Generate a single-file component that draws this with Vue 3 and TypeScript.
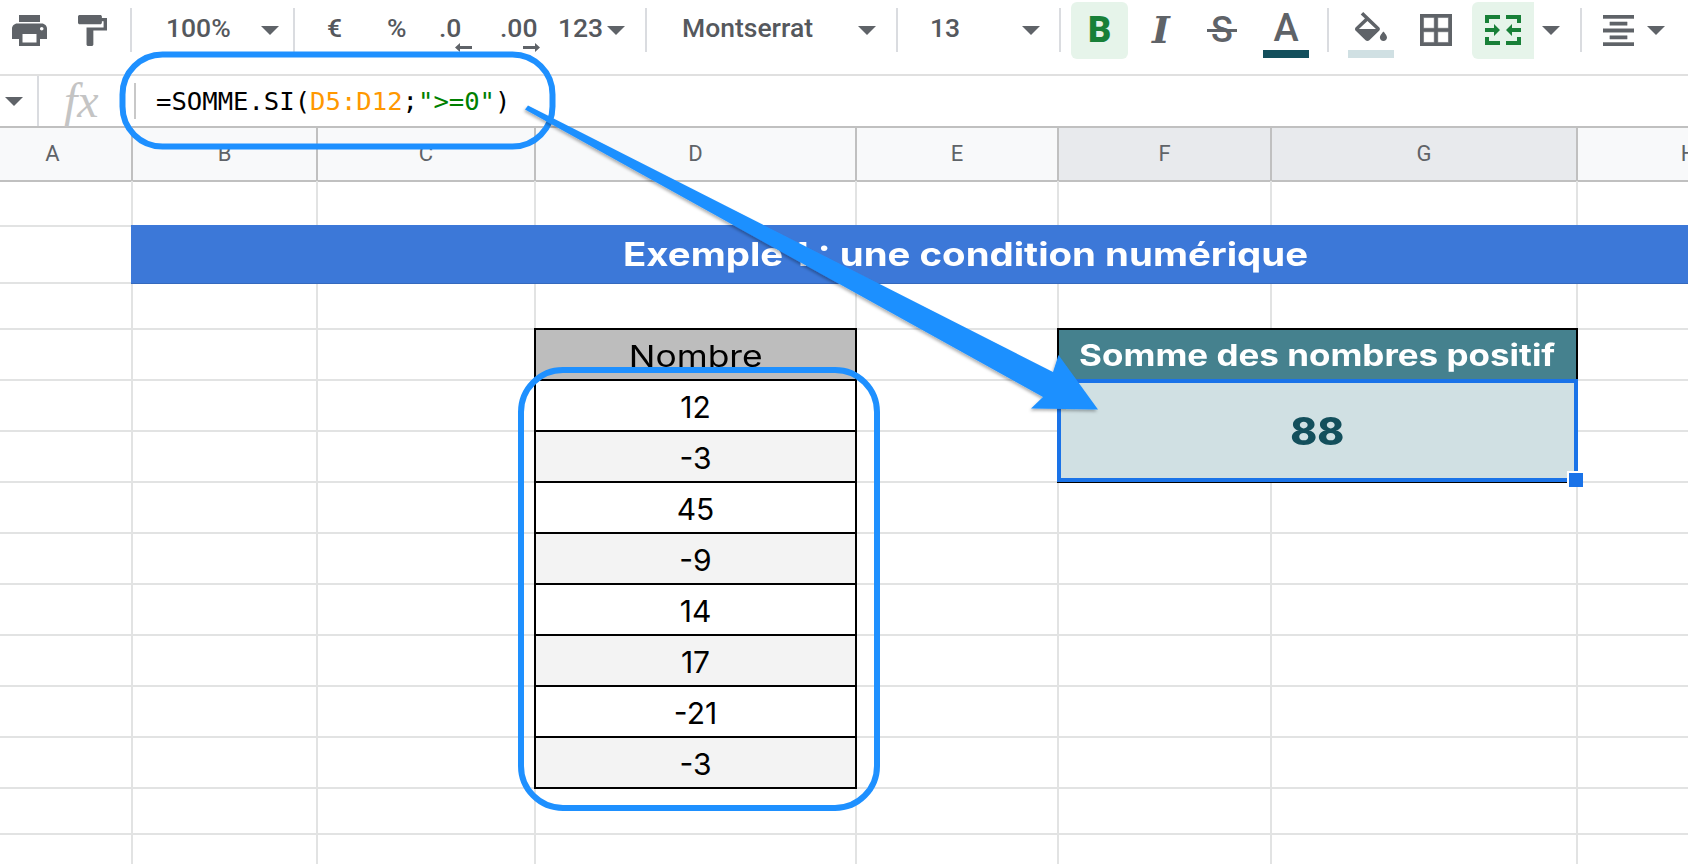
<script setup lang="ts">
interface Cell { key: string; text?: string; cls: string; col: number; row: number; colSpan?: number; rowSpan?: number }

const columns = ['A', 'B', 'C', 'D', 'E', 'F', 'G', 'H']
const selectedColumns = ['F', 'G']
const numbers = ['12', '-3', '45', '-9', '14', '17', '-21', '-3']
const rowCount = 14

const cells: Cell[] = []
for (let row = 1; row <= rowCount; row++) {
  for (let col = 1; col <= 8; col++) {
    const isBand = row === 2 && col >= 2
    const isResult = (row === 4 || row === 5 || row === 6) && (col === 6 || col === 7)
    const isTable = col === 4 && row >= 4 && row <= 12
    if (isBand || isResult || isTable) continue
    cells.push({ key: `${row}-${col}`, cls: 'grid-cell', col, row })
  }
}
cells.push({ key: 'band', text: 'Exemple 1 : une condition numérique', cls: 'band', col: 2, row: 2, colSpan: 7 })
cells.push({ key: 'head', text: 'Nombre', cls: 'tcell thead', col: 4, row: 4 })
numbers.forEach((n, i) => {
  cells.push({ key: `n${i}`, text: n, cls: i % 2 ? 'tcell alt' : 'tcell', col: 4, row: 5 + i })
})
cells.push({ key: 'rh', text: 'Somme des nombres positif', cls: 'rhead', col: 6, row: 4, colSpan: 2 })

function area(c: Cell): string {
  return `${c.row} / ${c.col} / span ${c.rowSpan ?? 1} / span ${c.colSpan ?? 1}`
}
</script>

<template>
  <div class="page">
    <header class="toolbar">
      <svg class="ic i-print" viewBox="2 3 20 18" preserveAspectRatio="none"><path d="M19 8H5c-1.66 0-3 1.34-3 3v6h4v4h12v-4h4v-6c0-1.66-1.34-3-3-3zm-3 11H8v-5h8v5zm3-7c-.55 0-1-.45-1-1s.45-1 1-1 1 .45 1 1-.45 1-1 1zm-1-9H6v4h12V3z"/></svg>
      <svg class="ic i-roller" viewBox="4 2 17 20" preserveAspectRatio="none"><path d="M18 4V3c0-.55-.45-1-1-1H5c-.55 0-1 .45-1 1v4c0 .55.45 1 1 1h12c.55 0 1-.45 1-1V6h1v4H9v11c0 .55.45 1 1 1h2c.55 0 1-.45 1-1v-9h8V4h-3z"/></svg>
      <i class="sep s1"></i>
      <span class="tx t-zoom">100%</span><i class="caret c-zoom"></i>
      <i class="sep s2"></i>
      <span class="tx t-eur">€</span>
      <span class="tx t-pct">%</span>
      <span class="tx t-d0">.0<svg class="mini mini-l" viewBox="0 0 17 9"><path d="M0 4.500 5 0v3h12v3H5v3z"/></svg></span>
      <span class="tx t-d00">.00<svg class="mini mini-r" viewBox="0 0 17 9"><path d="M17 4.500 12 0v3H0v3h12v3z"/></svg></span>
      <span class="tx t-123">123</span><i class="caret c-123"></i>
      <i class="sep s3"></i>
      <span class="tx t-font">Montserrat</span><i class="caret c-font"></i>
      <i class="sep s4"></i>
      <span class="tx t-size">13</span><i class="caret c-size"></i>
      <i class="sep s5"></i>
      <span class="btn-b">B</span>
      <span class="t-i">I</span>
      <span class="t-s">S</span>
      <span class="t-a"><b>A</b><i class="bar bar-a"></i></span>
      <i class="sep s6"></i>
      <span class="fill">
        <svg class="ic i-bucket" viewBox="3 0 18 17" preserveAspectRatio="none"><path d="M16.56 8.94L7.62 0 6.21 1.41l2.38 2.38-5.15 5.15c-.59.59-.59 1.54 0 2.12l5.5 5.5c.29.29.68.44 1.06.44s.77-.15 1.06-.44l5.5-5.5c.59-.58.59-1.53 0-2.12zM5.21 10L10 5.21 14.79 10H5.21zM19 11.5s-2 2.17-2 3.5c0 1.1.9 2 2 2s2-.9 2-2c0-1.33-2-3.5-2-3.5z"/></svg>
        <i class="bar bar-f"></i>
      </span>
      <svg class="ic i-border" viewBox="3 3 18 18"><path stroke="#5f6368" stroke-width=".3" d="M3 3v18h18V3H3zm8 16H5v-6h6v6zm0-8H5V5h6v6zm8 8h-6v-6h6v6zm0-8h-6V5h6v6z"/></svg>
      <span class="btn-merge">
        <svg viewBox="0 0 36 30" width="36" height="30"><path fill="#188038" d="M0 0h15v4H4v4H0zM21 0h15v8h-4V4H21zM0 22h4v4h11v4H0zM32 22h4v8H21v-4h11zM0 13h9V9l6 6-6 6v-4H0zM36 13h-9V9l-6 6 6 6v-4h9z"/></svg>
      </span>
      <i class="caret c-merge"></i>
      <i class="sep s7"></i>
      <svg class="ic i-align" viewBox="3 3 18 18"><path stroke="#5f6368" stroke-width=".25" d="M7 15v2h10v-2H7zm-4 6h18v-2H3v2zm0-8h18v-2H3v2zm4-6v2h10V7H7zM3 3v2h18V3H3z"/></svg>
      <i class="caret c-align"></i>
    </header>

    <div class="formula">
      <i class="caret c-name"></i>
      <i class="fsep f1"></i>
      <span class="fx">fx</span>
      <i class="fsep f2"></i>
      <span class="code">=SOMME.SI(<span class="orange">D5:D12</span>;<span class="green">"&gt;=0"</span>)</span>
    </div>

    <div class="cols heads">
      <div
        v-for="c in columns"
        :key="c"
        class="head"
        :class="[{ sel: selectedColumns.includes(c) }, c === 'A' ? 'head-a' : '']"
      >{{ c }}</div>
    </div>

    <div class="cols sheet">
      <div v-for="c in cells" :key="c.key" :class="c.cls" :style="{ gridArea: area(c) }"><span v-if="c.text" class="txt">{{ c.text }}</span></div>
      <div class="result"><span class="txt">88</span><i class="handle"></i></div>
    </div>

    <svg class="overlay" viewBox="0 0 1688 864">
      <defs>
        <filter id="sh" x="-5%" y="-5%" width="110%" height="115%">
          <feDropShadow dx="-1" dy="2" stdDeviation="1.500" flood-color="#000" flood-opacity=".3"/>
        </filter>
      </defs>
      <rect x="122.500" y="54.500" width="430" height="92" rx="40" fill="none" stroke="#1e90ff" stroke-width="6"/>
      <rect x="521" y="370" width="356" height="438" rx="42" fill="none" stroke="#1e90ff" stroke-width="6"/>
      <path filter="url(#sh)" fill="#1e90ff" d="M525 109.500 528 105.500 1053 372 1058.500 355 1098 409.500 1031 408.500 1043 397z"/>
    </svg>
  </div>
</template>

<style>
html, body { margin: 0; background: #fff; }
</style>

<style scoped>
.page {
  position: relative;
  width: 1688px;
  height: 864px;
  overflow: hidden;
  background: #fff;
  font-family: "Inter", "Liberation Sans", sans-serif;
}

/* toolbar */
.toolbar {
  display: flex;
  align-items: center;
  box-sizing: border-box;
  height: 76px;
  padding-bottom: 14px;
  border-bottom: 2px solid #e0e0e0;
  color: #5f6368;
  white-space: nowrap;
}
.ic { fill: #5f6368; flex: none; display: block; }
.i-print { width: 35px; height: 31px; margin-left: 12px; }
.i-roller { width: 29px; height: 31px; margin-left: 31px; }
.sep { flex: none; width: 2px; height: 44px; background: #dadce0; }
.s1 { margin-left: 23px; }
.s2 { margin-left: 14px; }
.s3 { margin-left: 20px; }
.s4 { margin-left: 20px; }
.s5 { margin-left: 19px; }
.s6 { margin-left: 18px; }
.s7 { margin-left: 20px; }
.tx {
  flex: none;
  position: relative;
  font: 500 26.500px/30px "Roboto", "Liberation Sans", sans-serif;
  color: #55585d;
  padding-bottom: 4px;
}
.caret {
  flex: none;
  width: 0;
  height: 0;
  border-left: 9px solid transparent;
  border-right: 9px solid transparent;
  border-top: 9px solid #5f6368;
}
.t-zoom { margin-left: 34px; width: 62px; }
.c-zoom { margin-left: 33px; }
.t-eur { margin-left: 32px; width: 15px; }
.t-pct { margin-left: 45px; width: 19px; }
.t-d0 { margin-left: 33px; width: 20px; }
.t-d00 { margin-left: 41px; width: 37px; }
.mini { position: absolute; width: 17px; height: 9px; top: 30px; fill: #5f6368; }
.mini-l { left: 16px; }
.mini-r { left: 23px; }
.t-123 { margin-left: 21px; width: 44px; }
.c-123 { margin-left: 5px; }
.t-font { margin-left: 35px; width: 131px; }
.c-font { margin-left: 45px; }
.t-size { margin-left: 32px; width: 28px; }
.c-size { margin-left: 64px; }
.btn-b {
  flex: none;
  margin-left: 10px;
  width: 57px;
  height: 57px;
  border-radius: 6px;
  background: #e6f4ea;
  color: #188038;
  font: 900 36px/57px "Roboto", sans-serif;
  text-align: center;
}
.t-i {
  flex: none;
  margin-left: 20px;
  width: 26px;
  font: italic 700 38px/40px "DejaVu Serif", serif;
  text-align: center;
}
.t-s {
  flex: none;
  position: relative;
  margin-left: 33px;
  width: 30px;
  font: 500 36px/40px "Roboto", sans-serif;
  text-align: center;
}
.t-s::after {
  content: "";
  position: absolute;
  left: 0;
  right: 0;
  top: 19px;
  height: 3px;
  background: #5f6368;
}
.t-a {
  flex: none;
  display: flex;
  flex-direction: column;
  align-items: center;
  margin-left: 26px;
  width: 46px;
}
.t-a b { font: 500 38px/38px "Roboto", sans-serif; padding-top: 7px; }
.bar { display: block; width: 46px; height: 8px; }
.bar-a { background: #134f5c; margin-top: 3px; }
.bar-f { background: #d0e0e3; margin-top: 9px; }
.fill {
  flex: none;
  display: flex;
  flex-direction: column;
  align-items: center;
  padding-top: 10px;
  margin-left: 19px;
  width: 46px;
}
.i-bucket { width: 32px; height: 29px; }
.i-border { width: 32px; height: 32px; margin-left: 26px; }
.btn-merge {
  flex: none;
  display: flex;
  align-items: center;
  justify-content: center;
  margin-left: 20px;
  width: 62px;
  height: 57px;
  background: #e6f4ea;
  border-radius: 6px 0 0 6px;
}
.c-merge { margin-left: 8px; }
.i-align { width: 31px; height: 31px; margin-left: 21px; }
.c-align { margin-left: 13px; }

/* formula bar */
.formula {
  display: flex;
  align-items: center;
  height: 50px;
  border-bottom: 2px solid #c0c0c0;
  box-sizing: content-box;
}
.c-name { margin-left: 5px; }
.fsep { flex: none; width: 2px; background: #dadce0; }
.f1 { height: 50px; margin-left: 14px; }
.f2 { height: 36px; margin-left: 28px; background: #c8c8c8; }
.fx {
  flex: none;
  width: 42px;
  margin-left: 25px;
  font: italic 400 48px/48px "Liberation Serif", serif;
  color: #c4c4c4;
}
.code {
  margin-left: 20px;
  font: 400 25.600px/50px "DejaVu Sans Mono", monospace;
  color: #000;
  white-space: pre;
}
.orange { color: #ff9800; }
.green { color: #008000; }

/* grids */
.cols {
  display: grid;
  grid-template-columns: 133px 185px 218px 321px 202px 213px 306px 223px;
  width: 1801px;
}
.heads { height: 53px; }
.head {
  box-sizing: border-box;
  background: #f8f9fa;
  border-right: 2px solid #c0c0c0;
  border-bottom: 2px solid #c0c0c0;
  text-align: center;
  font: 400 22px/52px "Roboto", sans-serif;
  color: #5f6368;
}
.head-a { padding-right: 26px; }
.sel { background: #e8eaed; }

.sheet {
  grid-template-rows: 46px 57px 46px repeat(9, 51px) 46px 40px;
}
.grid-cell {
  box-sizing: border-box;
  border-right: 2px solid #e2e3e3;
  border-bottom: 2px solid #e2e3e3;
}
.txt { display: inline-block; }
.band {
  margin: -2px 0 0 -2px;
  background: #3c78d8;
  border-bottom: 1px solid #3569bd;
  color: #fff;
  font-weight: 700;
  font-size: 33px;
  line-height: 59px;
  text-align: center;
}
.band .txt { transform: scaleX(1.163); }
.tcell {
  margin: -2px 0 0 -2px;
  border: 2px solid #000;
  background: #fff;
  color: #000;
  font-size: 30px;
  line-height: 53px;
  text-align: center;
}
.thead { background: #bdbdbd; }
.thead .txt { transform: scaleX(1.18); }
.alt { background: #f3f3f3; }
.rhead {
  margin: -2px 0 0 -2px;
  border: 2px solid #000;
  background: #45818e;
  color: #fff;
  font-weight: 700;
  font-size: 30px;
  line-height: 51px;
  text-align: center;
  white-space: nowrap;
}
.rhead .txt { transform: scaleX(1.166); }
.result {
  grid-area: 5 / 6 / span 2 / span 2;
  position: relative;
  box-sizing: border-box;
  margin: -2px 0 1px -2px;
  border: 4px solid #1a73e8;
  background: #d0e0e3;
  color: #134f5c;
  font-weight: 800;
  font-size: 38px;
  line-height: 96px;
  text-align: center;
  box-shadow: 0 1px 0 #000;
}
.result .txt { transform: scaleX(1.07); }
.handle {
  position: absolute;
  right: -9px;
  bottom: -9px;
  box-sizing: border-box;
  width: 14px;
  height: 14px;
  background: #1a73e8;
  box-shadow: -2px -2px 0 #fff;
}
.overlay {
  position: absolute;
  left: 0;
  top: 0;
  width: 1688px;
  height: 864px;
  pointer-events: none;
}
</style>
